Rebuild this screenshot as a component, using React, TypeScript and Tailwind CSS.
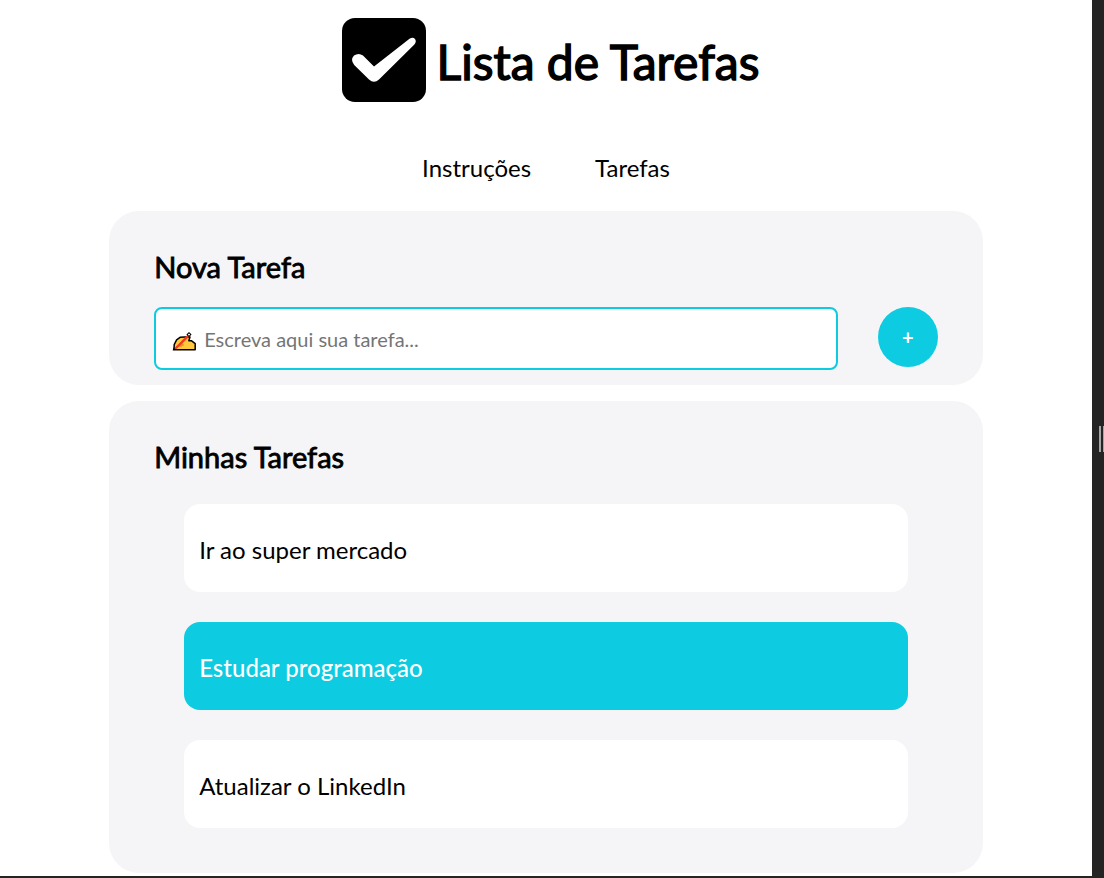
import { useState } from "react";

type Task = { id: number; text: string; done: boolean };

const initialTasks: Task[] = [
  { id: 1, text: "Ir ao super mercado", done: false },
  { id: 2, text: "Estudar programação", done: true },
  { id: 3, text: "Atualizar o LinkedIn", done: false },
];

function CheckLogo() {
  return (
    <svg className="mx-2.5 size-[84px] shrink-0" viewBox="0 0 84 84" aria-hidden="true">
      <rect width="84" height="84" rx="13" fill="#000" />
      <path
        d="M12 37.6 Q16.6 34.4 21 37.6 L32 48.6 L67.5 20.8 Q71 18.8 73 21 Q74.8 23.6 72.4 26.6 L37 61.6 Q32 66 27 61.6 L12.2 47 Q8 42 12 37.6 Z"
        fill="#fff"
      />
    </svg>
  );
}

function WritingHand() {
  return (
    <svg className="mt-1 h-5 w-6 shrink-0" viewBox="0 0 24 20" aria-hidden="true">
      <path
        d="M2 18.8 L2.2 13.6 L4.6 8.8 L8.4 6.2 L12.4 6 L18 6 L16.8 9.8 L19.6 9.8 L23.2 12.6 L23.2 18.8 Z"
        fill="#ffc83d"
        stroke="#000"
        strokeWidth="1.5"
        strokeLinejoin="round"
      />
      <path d="M6.5 15.4 L10.4 12 L12.2 14 L9 16 Z" fill="#e8931a" />
      <path d="M2 17.4 L15.6 3.8 L17.4 5.6 L4 18.6 Z" fill="#ef3b1f" />
      <path d="M14.4 3.6 L17 1 L19.6 3.4 L17 6 Z" fill="#000" />
      <path d="M15.8 3.6 L17 2.4 L18.2 3.6 L17 4.8 Z" fill="#fff" />
      <path d="M0.6 19.6 L1.6 16.4 L4 18.8 Z" fill="#000" />
    </svg>
  );
}

export default function App() {
  const [tasks, setTasks] = useState<Task[]>(initialTasks);
  const [draft, setDraft] = useState("");

  const addTask = () => {
    const text = draft.trim();
    if (!text) return;
    setTasks([...tasks, { id: Date.now(), text, done: false }]);
    setDraft("");
  };

  const toggle = (id: number) =>
    setTasks(tasks.map((t) => (t.id === id ? { ...t, done: !t.done } : t)));

  return (
    <div className="flex min-h-screen bg-white font-['Lato',sans-serif] text-black">
      <div className="flex min-w-0 grow flex-col border-b-2 border-[#242424]">
        <header className="flex items-center justify-center pt-[18px]">
          <CheckLogo />
          <h1 className="pt-1 text-5xl font-normal [-webkit-text-stroke:0.03em_black]">Lista de Tarefas</h1>
        </header>

        <nav className="flex justify-center gap-16 pt-12 pb-[25px]">
          <a href="#instrucoes" className="text-2xl leading-9">Instruções</a>
          <a href="#tarefas" className="text-2xl leading-9">Tarefas</a>
        </nav>

        <main className="mx-auto flex w-4/5 flex-col gap-4">
          <section className="rounded-[30px] bg-[#f5f5f8] px-[45px] pt-[38px] pb-[15px]">
            <h2 className="text-[29px] leading-9 font-normal [-webkit-text-stroke:0.03em_black]">Nova Tarefa</h2>
            <form
              className="flex gap-10 pt-[22px]"
              onSubmit={(e) => {
                e.preventDefault();
                addTask();
              }}
            >
              <label className="flex h-[63px] min-w-0 grow items-center gap-2 rounded-lg border-2 border-[#0dcbe0] bg-white px-4">
                <WritingHand />
                <input
                  type="text"
                  aria-label="Nova tarefa"
                  placeholder="Escreva aqui sua tarefa..."
                  value={draft}
                  onChange={(e) => setDraft(e.target.value)}
                  className="min-w-0 grow bg-transparent text-xl outline-none placeholder:text-[#757575]"
                />
              </label>
              <button
                type="submit"
                aria-label="Adicionar tarefa"
                className="size-[60px] shrink-0 rounded-full bg-[#0dcbe0] text-xl font-bold text-white"
              >
                +
              </button>
            </form>
          </section>

          <section id="tarefas" className="rounded-[30px] bg-[#f5f5f8] px-[45px] pt-[38px] pb-[45px]">
            <h2 className="text-[29px] leading-9 font-normal [-webkit-text-stroke:0.03em_black]">Minhas Tarefas</h2>
            <ul className="flex flex-col gap-[30px] px-[30px] pt-[29px]">
              {tasks.map((t) => (
                <li key={t.id}>
                  <button
                    type="button"
                    aria-pressed={t.done}
                    onClick={() => toggle(t.id)}
                    className={
                      t.done
                        ? "h-[88px] w-full rounded-2xl bg-[#0dcbe0] px-[15px] pt-1 text-left text-2xl font-medium text-white"
                        : "h-[88px] w-full rounded-2xl bg-white px-[15px] pt-1 text-left text-2xl text-black"
                    }
                  >
                    {t.text}
                  </button>
                </li>
              ))}
            </ul>
          </section>
        </main>
      </div>

      <aside className="flex w-3 shrink-0 items-center justify-end gap-0.5 bg-[#242424]">
        <span className="h-[26px] w-0.5 bg-[#a6a6a6]" />
        <span className="h-[26px] w-px bg-[#a6a6a6]" />
      </aside>
    </div>
  );
}
